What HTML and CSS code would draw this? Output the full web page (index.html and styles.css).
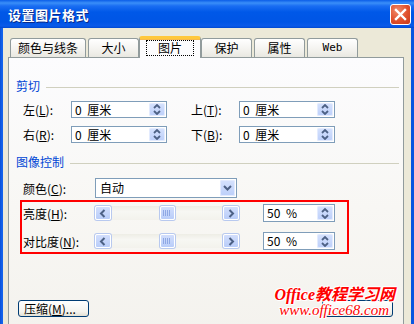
FILE: index.html
```html
<!DOCTYPE html>
<html lang="zh-CN">
<head>
    <meta charset="UTF-8">
    <title>设置图片格式</title>
    <link rel="stylesheet" href="styles.css">
</head>
<body>
    <div class="window">
        <div class="titlebar">
            <span class="title">设置图片格式</span>
            <div class="close">
                <svg width="13" height="13" viewBox="0 0 13 13"><path d="M2 2l9 9M11 2l-9 9" stroke="#fff" stroke-width="2.4" stroke-linecap="square"/></svg>
            </div>
        </div>

        <div class="client">
            <div class="tabs">
                <div class="tab">颜色与线条</div>
                <div class="tab">大小</div>
                <div class="tab active"><span class="focus">图片</span></div>
                <div class="tab">保护</div>
                <div class="tab">属性</div>
                <div class="tab tab-web">Web</div>
            </div>

            <div class="panel">
                <div class="group-title"><span>剪切</span></div>

                <div class="crop-row">
                    <div class="pair">
                        <span class="lbl">左(<u>L</u>):</span>
                        <div class="spinbox"><span class="val">0 厘米</span><div class="spin"></div></div>
                    </div>
                    <div class="pair">
                        <span class="lbl">上(<u>T</u>):</span>
                        <div class="spinbox"><span class="val">0 厘米</span><div class="spin"></div></div>
                    </div>
                </div>
                <div class="crop-row">
                    <div class="pair">
                        <span class="lbl">右(<u>R</u>):</span>
                        <div class="spinbox"><span class="val">0 厘米</span><div class="spin"></div></div>
                    </div>
                    <div class="pair">
                        <span class="lbl">下(<u>B</u>):</span>
                        <div class="spinbox"><span class="val">0 厘米</span><div class="spin"></div></div>
                    </div>
                </div>

                <div class="group-title second"><span>图像控制</span></div>

                <div class="color-row">
                    <span class="lbl-wide">颜色(<u>C</u>):</span>
                    <div class="combo">
                        <span class="val">自动</span>
                        <div class="combo-btn">
                            <svg width="9" height="6" viewBox="0 0 9 6"><path d="M1 1l3.5 3.5L8 1" stroke="#4d6185" stroke-width="2" fill="none"/></svg>
                        </div>
                    </div>
                </div>

                <div class="mark">
                    <div class="slider-row">
                        <span class="lbl-wide">亮度(<u>H</u>):</span>
                        <div class="hscroll">
                            <div class="sb-btn"><svg width="8" height="9" viewBox="0 0 8 9"><path d="M5.5 1L2 4.5 5.5 8" stroke="#4d6185" stroke-width="2" fill="none"/></svg></div>
                            <div class="sb-thumb"><svg width="8" height="6" viewBox="0 0 8 6"><path d="M0.5 0v6M2.5 0v6M4.5 0v6M6.5 0v6" stroke="#8fa8e4" stroke-width="1"/></svg></div>
                            <div class="sb-btn"><svg width="8" height="9" viewBox="0 0 8 9"><path d="M2.5 1L6 4.5 2.5 8" stroke="#4d6185" stroke-width="2" fill="none"/></svg></div>
                        </div>
                        <div class="spinbox pct"><span class="val">50 %</span><div class="spin"></div></div>
                    </div>
                    <div class="slider-row">
                        <span class="lbl-wide">对比度(<u>N</u>):</span>
                        <div class="hscroll">
                            <div class="sb-btn"><svg width="8" height="9" viewBox="0 0 8 9"><path d="M5.5 1L2 4.5 5.5 8" stroke="#4d6185" stroke-width="2" fill="none"/></svg></div>
                            <div class="sb-thumb"><svg width="8" height="6" viewBox="0 0 8 6"><path d="M0.5 0v6M2.5 0v6M4.5 0v6M6.5 0v6" stroke="#8fa8e4" stroke-width="1"/></svg></div>
                            <div class="sb-btn"><svg width="8" height="9" viewBox="0 0 8 9"><path d="M2.5 1L6 4.5 2.5 8" stroke="#4d6185" stroke-width="2" fill="none"/></svg></div>
                        </div>
                        <div class="spinbox pct"><span class="val">50 %</span><div class="spin"></div></div>
                    </div>
                </div>

                <div class="button-row">
                    <div class="btn">压缩(<u>M</u>)...</div>
                    <div class="btn"></div>
                    <div class="watermark">
                        <div class="wm-top">Office教程学习网</div>
                        <div class="wm-url">www.office68.com</div>
                    </div>
                </div>
            </div>
        </div>
    </div>
</body>
</html>
```

FILE: styles.css
```css
body {
    margin: 0;
    font-family: "Noto Sans CJK SC", "DejaVu Sans", sans-serif;
    font-size: 12px;
    color: #000;
    background: #fff;
}
u {
    text-decoration: underline;
}
.window {
    width: 414px;
    height: 324px;
    overflow: hidden;
    display: flex;
    flex-direction: column;
    background: linear-gradient(90deg, #0a4fd6, #1363ec 2px, #0a56e0);
}
.titlebar {
    height: 28px;
    flex: none;
    display: flex;
    align-items: center;
    justify-content: space-between;
    padding: 0 3px 0 8px;
    background: linear-gradient(#0b5de8 0, #3a8ff8 3px, #1a6df2 6px, #0058e8 12px, #0055e5 22px, #0a5ae9 26px, #0048d0 28px);
}
.title {
    color: #fff;
    font-weight: bold;
    font-size: 13px;
    letter-spacing: 0.5px;
    text-shadow: 1px 1px 0 #0a2a8a;
}
.close {
    width: 19px;
    height: 19px;
    border: 1px solid #fff;
    border-radius: 3px;
    display: flex;
    align-items: center;
    justify-content: center;
    background: radial-gradient(circle at 35% 30%, #f08a6a, #e0502c 55%, #c7391a);
}
.client {
    flex: 1;
    margin: 0 3px;
    padding: 8px 7px 0 5px;
    background: #ece9d8;
}
.tabs {
    display: flex;
    align-items: flex-end;
    height: 21px;
    padding-left: 2px;
}
.tab {
    height: 19px;
    min-width: 51px;
    padding: 0 7px;
    box-sizing: border-box;
    margin-right: 2px;
    display: flex;
    align-items: center;
    justify-content: center;
    border: 1px solid #919b9c;
    border-bottom: none;
    border-radius: 3px 3px 0 0;
    background: linear-gradient(#ffffff, #f3f2ee 60%, #e9e8e1);
    line-height: 14px;
}
.tab.active {
    position: relative;
    z-index: 1;
    height: 22px;
    min-width: 57px;
    margin: 0 0 -1px -2px;
    border-top: 3px solid #ffc83c;
    box-shadow: inset 0 1px 0 #f7b94a;
    background: #fcfcfe;
    padding-bottom: 1px;
}
.focus {
    outline: 1px dotted #000;
    outline-offset: 0;
    padding: 0 11px;
    line-height: 14px;
}
.tab-web {
    font-family: "DejaVu Sans Mono", monospace;
    font-size: 11px;
}
.panel {
    height: 300px;
    border: 1px solid #919b9c;
    padding: 0 4px 0 7px;
    background: linear-gradient(#fcfcfe, #f8f7f4 50%, #f3f1ec);
}
.group-title {
    margin-top: 21px;
    display: flex;
    align-items: center;
    gap: 6px;
    line-height: 14px;
    color: #0046d5;
}
.group-title::after {
    content: "";
    flex: 1;
    height: 1px;
    margin-top: 3px;
    background: #d0d0bf;
}
.group-title.second {
    margin-top: 12px;
}
.crop-row {
    display: flex;
    margin-top: 8px;
    padding-left: 7px;
}
.pair {
    display: flex;
    align-items: center;
}
.pair + .pair {
    margin-left: 24px;
}
.lbl {
    width: 48px;
}
.lbl-wide {
    width: 72px;
    flex: none;
}
.spinbox {
    width: 96px;
    height: 17px;
    box-sizing: border-box;
    border: 1px solid #7f9db9;
    background: #fff;
    display: flex;
    align-items: stretch;
    justify-content: space-between;
}
.spinbox .val {
    padding-left: 3px;
    line-height: 15px;
    word-spacing: 3px;
}
.spin {
    width: 16px;
    margin: 1px;
    border-radius: 2px;
    background:
        url("data:image/svg+xml;utf8,<svg xmlns='http://www.w3.org/2000/svg' width='16' height='13'><path d='M5 5L8 2 11 5M5 8L8 11 11 8' stroke='%234d6185' stroke-width='1.8' fill='none'/></svg>") center no-repeat,
        linear-gradient(#d6e2fd, #bccffa);
    box-shadow: inset 0 0 0 1px #e3ebfe;
}
.spinbox.pct {
    width: 72px;
    height: 18px;
    margin-left: 24px;
}
.spinbox.pct .val {
    line-height: 16px;
}
.color-row {
    display: flex;
    align-items: center;
    margin-top: 9px;
    padding-left: 7px;
}
.combo {
    width: 142px;
    height: 20px;
    box-sizing: border-box;
    border: 1px solid #7f9db9;
    background: #fff;
    display: flex;
    justify-content: space-between;
}
.combo .val {
    padding-left: 4px;
    line-height: 18px;
}
.combo-btn {
    width: 15px;
    margin: 1px;
    border-radius: 2px;
    display: flex;
    align-items: center;
    justify-content: center;
    background: linear-gradient(#d6e2fd, #bccffa);
    box-shadow: inset 0 0 0 1px #e3ebfe;
}
.mark {
    width: 329px;
    box-sizing: border-box;
    margin: 2px 0 0 4px;
    border: 2px solid #ff0000;
    padding: 2px 0 2px 1px;
    display: flex;
    flex-direction: column;
    gap: 10px;
}
.slider-row {
    display: flex;
    align-items: center;
    height: 18px;
}
.hscroll {
    width: 144px;
    height: 14px;
    flex: none;
    display: flex;
    justify-content: space-between;
    background: linear-gradient(#eeede5, #f7f7f3 40%, #f3f2ec);
}
.sb-btn, .sb-thumb {
    width: 16px;
    box-sizing: border-box;
    border: 1px solid #fff;
    border-radius: 2px;
    display: flex;
    align-items: center;
    justify-content: center;
    background: linear-gradient(#d2defc, #b9cdf9);
    box-shadow: 0 0 0 1px #b8c9ef;
}
.sb-thumb {
    width: 15px;
}
.button-row {
    position: relative;
    display: flex;
    justify-content: space-between;
    margin: 46px 6px 0 2px;
}
.btn {
    width: 71px;
    height: 17px;
    box-sizing: border-box;
    border: 1px solid #003c74;
    border-radius: 3px;
    padding-left: 5px;
    line-height: 15px;
    background: linear-gradient(#ffffff, #f4f3ee 70%, #e3e0d4);
}
.watermark {
    position: absolute;
    right: -2px;
    top: -13px;
    text-align: right;
    color: #ff0000;
    text-shadow: 1px 0 0 #fff, -1px 0 0 #fff, 0 1px 0 #fff, 0 -1px 0 #fff, 1px 1px 0 #fff, -1px -1px 0 #fff;
}
.wm-top {
    font-size: 16px;
    font-weight: bold;
    font-style: italic;
    line-height: 16px;
    font-family: "Liberation Serif", "Noto Sans CJK SC", serif;
}
.wm-url {
    font-size: 15px;
    font-style: italic;
    line-height: 14px;
    margin-right: 6px;
    font-family: "Liberation Serif", serif;
}
```
